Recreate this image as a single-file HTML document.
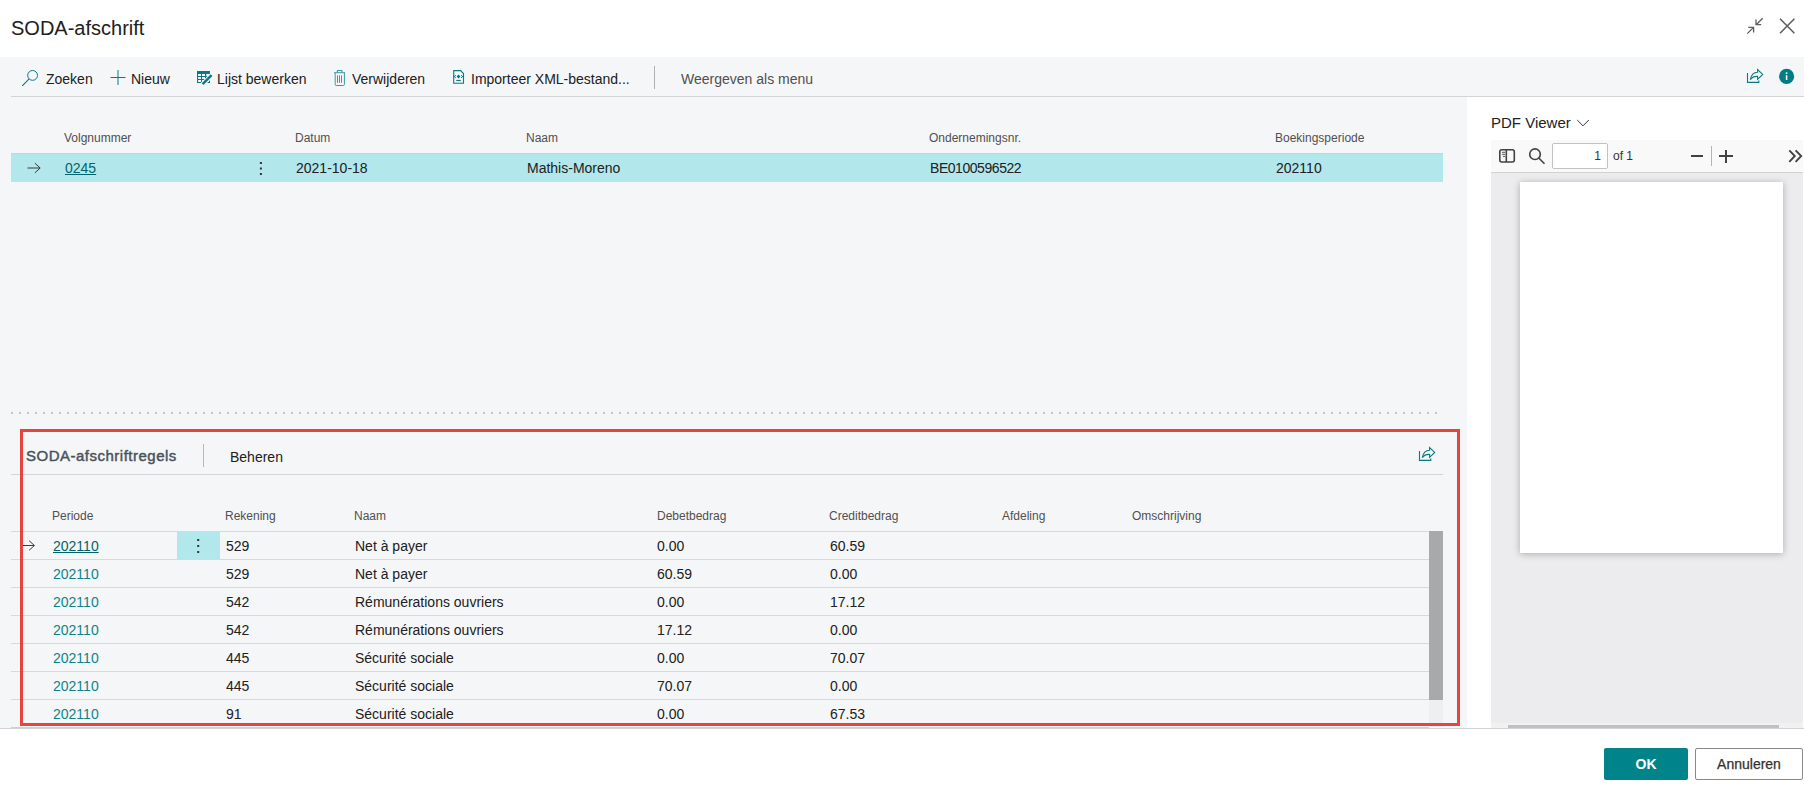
<!DOCTYPE html>
<html><head><meta charset="utf-8">
<style>
*{box-sizing:border-box;margin:0;padding:0}
html,body{width:1804px;height:788px;overflow:hidden;background:#fff;font-family:"Liberation Sans",sans-serif;color:#212121}
.abs{position:absolute;white-space:nowrap}
.bx{position:absolute}
#title{left:11px;top:17px;font-size:20px;color:#212121}
.tb{font-size:14px;top:71px;color:#212121}
.hdr{font-size:12px;color:#505050}
.val{font-size:14px;color:#212121}
.lnk{font-size:14px;color:#00656b;text-decoration:underline}
.lnk2{font-size:14px;color:#0a858c}
svg{position:absolute;overflow:visible}
</style></head><body>
<div class="abs" id="title">SODA-afschrift</div>
<!-- top-right icons -->
<svg style="left:1740px;top:12px" width="30" height="30" viewBox="1740 12 30 30" fill="none" stroke="#5f5f5f" stroke-width="1.3">
  <path d="M1747.3 33.6 L1753.3 27.6 M1748.2 27.3 H1753.6 V32.5"/>
  <path d="M1762.7 18.3 L1756.7 24.3 M1756 19.4 V24.6 H1761.2"/>
</svg>
<svg style="left:1775px;top:14px" width="25" height="25" viewBox="1775 14 25 25" fill="none" stroke="#5f5f5f" stroke-width="1.6">
  <path d="M1780 18.8 L1794.4 33.2 M1794.4 18.8 L1780 33.2"/>
</svg>

<!-- toolbar -->
<div class="bx" style="left:0;top:57px;width:1804px;height:40px;background:#f5f6f8"></div>
<div class="bx" style="left:0;top:97px;width:1467px;height:631px;background:#f5f6f8"></div>
<div class="bx" style="left:1467px;top:97px;width:337px;height:631px;background:#fff"></div>
<div class="bx" style="left:11px;top:96px;width:1793px;height:1px;background:#d4d4d6"></div>

<div class="abs tb" style="left:46px">Zoeken</div>
<div class="abs tb" style="left:131px">Nieuw</div>
<div class="abs tb" style="left:217px">Lijst bewerken</div>
<div class="abs tb" style="left:352px">Verwijderen</div>
<div class="abs tb" style="left:471px">Importeer XML-bestand...</div>
<div class="bx" style="left:654px;top:66px;width:1px;height:23px;background:#b0b0b0"></div>
<div class="abs tb" style="left:681px;color:#505050">Weergeven als menu</div>

<!-- toolbar icons -->
<svg style="left:20px;top:68px" width="20" height="20" viewBox="20 68 20 20" fill="none" stroke="#0a7a82" stroke-width="1">
  <circle cx="32.6" cy="75.4" r="4.9"/>
  <path d="M29.1 78.9 L22.3 85.8" stroke-width="1.15"/>
</svg>
<svg style="left:108px;top:68px" width="20" height="20" viewBox="108 68 20 20" fill="none" stroke="#0a7a82" stroke-width="1">
  <path d="M118 70 V85 M110.5 77.5 H125.5"/>
</svg>
<svg style="left:195px;top:69px" width="20" height="20" viewBox="195 69 20 20">
  <path fill="#0a7a82" fill-rule="evenodd" d="M197 71 H210 V83 H197 Z M198.1 73.9 H201 V75.9 H198.1 Z M202 73.9 H205 V75.9 H202 Z M206.2 73.9 H209 V75.9 H206.2 Z M198.1 77 H201 V79 H198.1 Z M202 77 H205 V79 H202 Z M206.2 77 H209 V79 H206.2 Z M198.1 80 H201 V82 H198.1 Z M202 80 H205 V82 H202 Z M206.2 80 H209 V82 H206.2 Z"/>
  <path d="M201.5 85.3 L212.3 74.5" stroke="#f5f6f8" stroke-width="4.6"/>
  <path d="M202.6 84.2 L211.6 75.2" stroke="#0a7a82" stroke-width="2.4"/>
</svg>
<svg style="left:330px;top:68px" width="20" height="20" viewBox="330 68 20 20" fill="none" stroke="#3a9ca2" stroke-width="1">
  <path d="M334 72.7 H345"/>
  <path d="M337.3 72.5 V71 Q337.3 70.5 338 70.5 H341.4 Q342 70.5 342 71 V72.5" stroke-width="1.2"/>
  <path d="M335.2 72.8 V84.5 Q335.2 85.5 336.2 85.5 H343.4 Q344.4 85.5 344.4 84.5 V72.8"/>
  <path d="M337.5 75.4 V82.8 M339.5 75.4 V82.8 M341.5 75.4 V82.8"/>
</svg>
<svg style="left:450px;top:68px" width="20" height="20" viewBox="450 68 20 20" fill="none" stroke="#0a7a82" stroke-width="1.1">
  <path d="M453.7 70.6 H460.6 L463.5 73.5 V83.3 H453.7 Z"/>
  <path d="M456.3 80.5 H460.8" stroke-width="1.2"/>
  <path d="M458.5 74.6 L460.4 76.5 L458.5 78.4 L456.6 76.5 Z" fill="#0a7a82" stroke="none"/>
  <circle cx="455.4" cy="75.5" r="0.6" fill="#0a7a82" stroke="none"/><circle cx="455.4" cy="77.5" r="0.6" fill="#0a7a82" stroke="none"/>
  <circle cx="461.6" cy="75.5" r="0.6" fill="#0a7a82" stroke="none"/><circle cx="461.6" cy="77.5" r="0.6" fill="#0a7a82" stroke="none"/>
  <path d="M453.7 76.5 H455 M462 76.5 H463.5" stroke-width="1"/>
</svg>
<!-- right toolbar icons -->
<svg style="left:1744px;top:66px" width="22" height="20" viewBox="1744 66 22 20" fill="none" stroke="#0a7a82" stroke-width="1.1" stroke-linejoin="miter">
  <path d="M1747.5 73.0 V82.4 H1758.8 V80.6"/>
  <path d="M1750.3 79.6 C1751.2 74.5 1754.0 72.2 1757.6 72.2 L1757.6 69.6 L1762.7 74.4 L1757.6 79.3 L1757.6 76.4 C1754.5 76.2 1752.0 77.3 1750.3 79.6 Z"/>
</svg>
<svg style="left:1776px;top:66px" width="22" height="22" viewBox="1776 66 22 22">
  <circle cx="1786.6" cy="76.4" r="7.6" fill="#007d84"/>
  <rect x="1785.8" y="75.3" width="1.6" height="4.7" fill="#fff"/>
  <rect x="1785.8" y="72.4" width="1.6" height="1.5" fill="#fff"/>
</svg>

<!-- header list -->
<div class="abs hdr" style="left:64px;top:131px">Volgnummer</div>
<div class="abs hdr" style="left:295px;top:131px">Datum</div>
<div class="abs hdr" style="left:526px;top:131px">Naam</div>
<div class="abs hdr" style="left:929px;top:131px">Ondernemingsnr.</div>
<div class="abs hdr" style="left:1275px;top:131px">Boekingsperiode</div>

<div class="bx" style="left:11px;top:153px;width:1432px;height:29px;background:#b2e7eb;border-top:1px solid #c9d3d6"></div>
<svg style="left:24px;top:160px" width="20" height="16" viewBox="24 160 20 16" fill="none" stroke="#333" stroke-width="1.1">
  <path d="M27.5 168 H40 M34.9 163.2 L40.2 168 L34.9 172.8" stroke-width="0.95"/>
</svg>
<div class="abs lnk" style="left:65px;top:160px">0245</div>
<svg style="left:255px;top:160px" width="12" height="18" viewBox="255 160 12 18" fill="#333">
  <rect x="259.9" y="162" width="2" height="2"/><rect x="259.9" y="167.5" width="2" height="2"/><rect x="259.9" y="173" width="2" height="2"/>
</svg>
<div class="abs val" style="left:296px;top:160px">2021-10-18</div>
<div class="abs val" style="left:527px;top:160px">Mathis-Moreno</div>
<div class="abs val" style="left:930px;top:160px;letter-spacing:-0.45px">BE0100596522</div>
<div class="abs val" style="left:1276px;top:160px">202110</div>

<!-- dotted splitter -->
<div class="bx" style="left:8px;top:412px;width:1433px;height:2px;background-image:radial-gradient(circle,#c4c4c4 0.9px,transparent 1.1px);background-size:8px 2px;background-position:0 0"></div>

<!-- subpage -->
<div class="abs" style="left:26px;top:447px;font-size:15px;color:#4a525c;letter-spacing:0.5px;-webkit-text-stroke:0.45px #4a525c">SODA-afschriftregels</div>
<div class="bx" style="left:203px;top:444px;width:1px;height:23px;background:#b8b8b8"></div>
<div class="abs val" style="left:230px;top:449px">Beheren</div>
<svg style="left:1416px;top:444px" width="22" height="20" viewBox="1416 444 22 20" fill="none" stroke="#0a7a82" stroke-width="1.1" stroke-linejoin="miter">
  <path d="M1419.5 451.0 V460.4 H1430.8 V458.6"/>
  <path d="M1422.3 457.6 C1423.2 452.5 1426.0 450.2 1429.6 450.2 L1429.6 447.6 L1434.7 452.4 L1429.6 457.3 L1429.6 454.4 C1426.5 454.2 1424.0 455.3 1422.3 457.6 Z"/>
</svg>
<div class="bx" style="left:11px;top:474px;width:1432px;height:1px;background:#d4d4d6"></div>

<div class="abs hdr" style="left:52px;top:509px">Periode</div>
<div class="abs hdr" style="left:225px;top:509px">Rekening</div>
<div class="abs hdr" style="left:354px;top:509px">Naam</div>
<div class="abs hdr" style="left:657px;top:509px">Debetbedrag</div>
<div class="abs hdr" style="left:829px;top:509px">Creditbedrag</div>
<div class="abs hdr" style="left:1002px;top:509px">Afdeling</div>
<div class="abs hdr" style="left:1132px;top:509px">Omschrijving</div>

<div class="bx" style="left:11px;top:531px;width:1418px;height:1px;background:#d9d9db"></div>
<div class="abs lnk" style="left:53px;top:538px">202110</div>
<div class="abs val" style="left:226px;top:538px">529</div>
<div class="abs val" style="left:355px;top:538px">Net à payer</div>
<div class="abs val" style="left:657px;top:538px">0.00</div>
<div class="abs val" style="left:830px;top:538px">60.59</div>
<div class="bx" style="left:11px;top:559px;width:1418px;height:1px;background:#d9d9db"></div>
<div class="abs lnk2" style="left:53px;top:566px">202110</div>
<div class="abs val" style="left:226px;top:566px">529</div>
<div class="abs val" style="left:355px;top:566px">Net à payer</div>
<div class="abs val" style="left:657px;top:566px">60.59</div>
<div class="abs val" style="left:830px;top:566px">0.00</div>
<div class="bx" style="left:11px;top:587px;width:1418px;height:1px;background:#d9d9db"></div>
<div class="abs lnk2" style="left:53px;top:594px">202110</div>
<div class="abs val" style="left:226px;top:594px">542</div>
<div class="abs val" style="left:355px;top:594px">Rémunérations ouvriers</div>
<div class="abs val" style="left:657px;top:594px">0.00</div>
<div class="abs val" style="left:830px;top:594px">17.12</div>
<div class="bx" style="left:11px;top:615px;width:1418px;height:1px;background:#d9d9db"></div>
<div class="abs lnk2" style="left:53px;top:622px">202110</div>
<div class="abs val" style="left:226px;top:622px">542</div>
<div class="abs val" style="left:355px;top:622px">Rémunérations ouvriers</div>
<div class="abs val" style="left:657px;top:622px">17.12</div>
<div class="abs val" style="left:830px;top:622px">0.00</div>
<div class="bx" style="left:11px;top:643px;width:1418px;height:1px;background:#d9d9db"></div>
<div class="abs lnk2" style="left:53px;top:650px">202110</div>
<div class="abs val" style="left:226px;top:650px">445</div>
<div class="abs val" style="left:355px;top:650px">Sécurité sociale</div>
<div class="abs val" style="left:657px;top:650px">0.00</div>
<div class="abs val" style="left:830px;top:650px">70.07</div>
<div class="bx" style="left:11px;top:671px;width:1418px;height:1px;background:#d9d9db"></div>
<div class="abs lnk2" style="left:53px;top:678px">202110</div>
<div class="abs val" style="left:226px;top:678px">445</div>
<div class="abs val" style="left:355px;top:678px">Sécurité sociale</div>
<div class="abs val" style="left:657px;top:678px">70.07</div>
<div class="abs val" style="left:830px;top:678px">0.00</div>
<div class="bx" style="left:11px;top:699px;width:1418px;height:1px;background:#d9d9db"></div>
<div class="abs lnk2" style="left:53px;top:706px">202110</div>
<div class="abs val" style="left:226px;top:706px">91</div>
<div class="abs val" style="left:355px;top:706px">Sécurité sociale</div>
<div class="abs val" style="left:657px;top:706px">0.00</div>
<div class="abs val" style="left:830px;top:706px">67.53</div>
<div class="bx" style="left:11px;top:727px;width:1418px;height:1px;background:#d0d0d2"></div>
<!-- selected cell dots -->
<div class="bx" style="left:177px;top:532px;width:43px;height:27px;background:#b2e7eb"></div>
<svg style="left:190px;top:535px" width="16" height="20" viewBox="190 535 16 20" fill="#333">
  <rect x="197.2" y="539" width="2" height="2"/><rect x="197.2" y="545" width="2" height="2"/><rect x="197.2" y="551" width="2" height="2"/>
</svg>
<svg style="left:20px;top:538px" width="20" height="16" viewBox="20 538 20 16" fill="none" stroke="#333" stroke-width="1.1">
  <path d="M23 545.5 H34.3 M29.1 540.7 L34.4 545.5 L29.1 550.3" stroke-width="0.95"/>
</svg>
<!-- scrollbar -->
<div class="bx" style="left:1429px;top:531px;width:14px;height:196px;background:#efefef"></div>
<div class="bx" style="left:1429px;top:531px;width:14px;height:169px;background:#a9a9a9"></div>

<!-- red box -->
<div class="bx" style="left:20px;top:429px;width:1440px;height:297px;border:3px solid #e6443f"></div>

<!-- PDF pane -->
<div class="abs" style="left:1491px;top:114px;font-size:15px;color:#212121">PDF Viewer</div>
<svg style="left:1575px;top:116px" width="16" height="12" viewBox="1575 116 16 12" fill="none" stroke="#333" stroke-width="1">
  <path d="M1577.2 120 L1583 125.8 L1588.8 120"/>
</svg>
<div class="bx" style="left:1491px;top:140px;width:312px;height:33px;background:#f9f9fa;border-bottom:1px solid #d2d2d4"></div>
<div class="bx" style="left:1491px;top:173px;width:312px;height:550px;background:#ececee"></div>
<div class="bx" style="left:1491px;top:723px;width:312px;height:5px;background:#f1f1f1"></div>
<div class="bx" style="left:1508px;top:725px;width:271px;height:3px;background:#c0c0c0"></div>
<div class="bx" style="left:1520px;top:182px;width:263px;height:371px;background:#fff;box-shadow:0 1px 7px rgba(0,0,0,0.28)"></div>
<svg style="left:1495px;top:145px" width="24" height="22" viewBox="1495 145 24 22" fill="none" stroke="#424242" stroke-width="1.6">
  <rect x="1499.8" y="149.7" width="14.5" height="12.3" rx="2"/>
  <path d="M1506.3 149.7 V162"/>
  <path d="M1501.9 152.3 H1505 M1501.9 154.3 H1505 M1503 156.4 H1505" stroke-width="0.9"/>
</svg>
<svg style="left:1526px;top:146px" width="22" height="22" viewBox="1526 146 22 22" fill="none" stroke="#424242" stroke-width="1.6">
  <circle cx="1535" cy="154.2" r="5.3"/>
  <path d="M1538.8 158 L1544.5 163.7"/>
</svg>
<div class="bx" style="left:1552px;top:143px;width:56px;height:26px;background:#fff;border:1px solid #c2c2c2;border-radius:2px"></div>
<div class="abs" style="left:1552px;top:149px;width:49px;text-align:right;font-size:12px;color:#333">1</div>
<div class="abs" style="left:1613px;top:149px;font-size:12px;color:#333">of 1</div>
<div class="bx" style="left:1690.8px;top:155px;width:12px;height:1.6px;background:#424242"></div>
<div class="bx" style="left:1711px;top:146px;width:1px;height:20px;background:#b5b5b5"></div>
<div class="bx" style="left:1719px;top:155.3px;width:14px;height:1.6px;background:#424242"></div>
<div class="bx" style="left:1725.2px;top:149.5px;width:1.6px;height:13.3px;background:#424242"></div>
<svg style="left:1786px;top:148px" width="18" height="16" viewBox="1786 148 18 16" fill="none" stroke="#424242" stroke-width="1.85">
  <path d="M1789.3 150.3 L1794.8 156 L1789.3 161.8 M1795.6 150.3 L1801.2 156 L1795.6 161.8"/>
</svg>

<!-- footer -->
<div class="bx" style="left:0;top:728px;width:1804px;height:1px;background:#d2d2d4"></div>
<div class="bx" style="left:1604px;top:748px;width:84px;height:32px;background:#008489;border-radius:2px"></div>
<div class="abs" style="left:1604px;top:756px;width:84px;text-align:center;font-size:14px;font-weight:bold;color:#fff">OK</div>
<div class="bx" style="left:1695px;top:748px;width:108px;height:32px;background:#fff;border:1px solid #8a8886;border-radius:2px"></div>
<div class="abs" style="left:1695px;top:756px;width:108px;text-align:center;font-size:14px;color:#323130;-webkit-text-stroke:0.25px #323130">Annuleren</div>
</body></html>
